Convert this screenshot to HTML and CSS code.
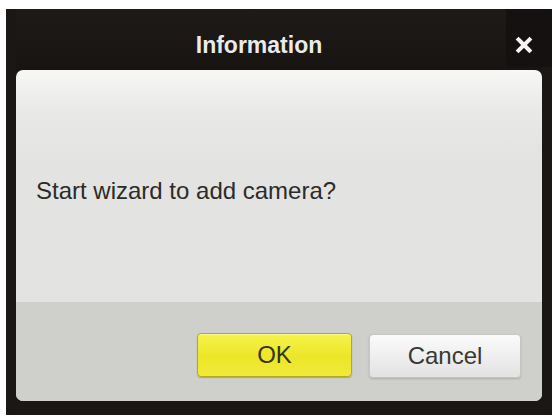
FILE: index.html
```html
<!DOCTYPE html>
<html>
<head>
<meta charset="utf-8">
<link rel="stylesheet" href="styles.css">
</head>
<body>
<div class="dialog">
  <div class="titlebar">
    <span class="title">Information</span>
    <span class="close" aria-label="Close">
      <svg width="18" height="18" viewBox="0 0 18 18"><path d="M3.5 3.5 L14.5 14.5 M14.5 3.5 L3.5 14.5" stroke="#f4f4f4" stroke-width="4" stroke-linecap="square" fill="none"/></svg>
    </span>
  </div>
  <div class="panel">
    <div class="message">Start wizard to add camera?</div>
    <div class="footer">
      <button class="btn btn-ok">OK</button>
      <button class="btn btn-cancel">Cancel</button>
    </div>
  </div>
</div>
</body>
</html>
```

FILE: styles.css
```css
html, body {
  background: #ffffff;
}
body {
  margin: 9px 4px 2px 6px;
  font-family: "Liberation Sans", Arial, sans-serif;
}
.dialog {
  width: 546px;
  height: 406px;
  background: #1b1715;
  box-sizing: border-box;
  padding: 0 10px 14px 10px;
  display: flex;
  flex-direction: column;
}
.titlebar {
  height: 61px;
  flex: none;
  display: flex;
  align-items: center;
  justify-content: center;
  position: relative;
  background: linear-gradient(#1e1a17, #171412);
}
.title {
  color: #ebebeb;
  font-weight: bold;
  font-size: 23px;
  margin-top: 11px;
  margin-right: 40px;
}
.close {
  position: absolute;
  right: -10px;
  top: 0;
  width: 46px;
  height: 58px;
  display: flex;
  align-items: center;
  justify-content: center;
  padding-top: 14px;
  padding-right: 10px;
  box-sizing: border-box;
  background: #141110;
}
.close svg { display: block; }
.panel {
  flex: 1;
  display: flex;
  flex-direction: column;
  border-radius: 7px;
  overflow: hidden;
  background: linear-gradient(#f7f7f5 0px, #e9e9e7 40px, #e3e3e1 90px, #e3e3e1 100%);
}
.message {
  height: 232px;
  box-sizing: border-box;
  padding: 107px 0 0 20px;
  font-size: 24px;
  line-height: 28px;
  color: #2b2b2b;
}
.footer {
  flex: 1;
  background: #cfcfcc;
  display: flex;
  justify-content: flex-end;
  align-items: flex-start;
  padding: 31px 21px 0 0;
  gap: 17px;
}
.btn {
  height: 44px;
  font-family: "Liberation Sans", Arial, sans-serif;
  font-size: 24px;
  border-radius: 4px;
  padding: 0;
  margin: 0;
}
.btn-ok {
  width: 155px;
  background: linear-gradient(#f6f34a, #ece628 55%, #f0ea3a);
  border: 1px solid #b3aa1e;
  color: #363512;
  box-shadow: inset 0 1px 0 #fbf98a, 0 1px 1px rgba(90, 85, 20, 0.35);
}
.btn-cancel {
  width: 152px;
  background: linear-gradient(#fbfbfb, #ececec 60%, #e2e2e2);
  border: 1px solid #c6c6c4;
  color: #383838;
  margin-top: 1px;
  box-shadow: 0 1px 2px rgba(0, 0, 0, 0.18);
}
```
